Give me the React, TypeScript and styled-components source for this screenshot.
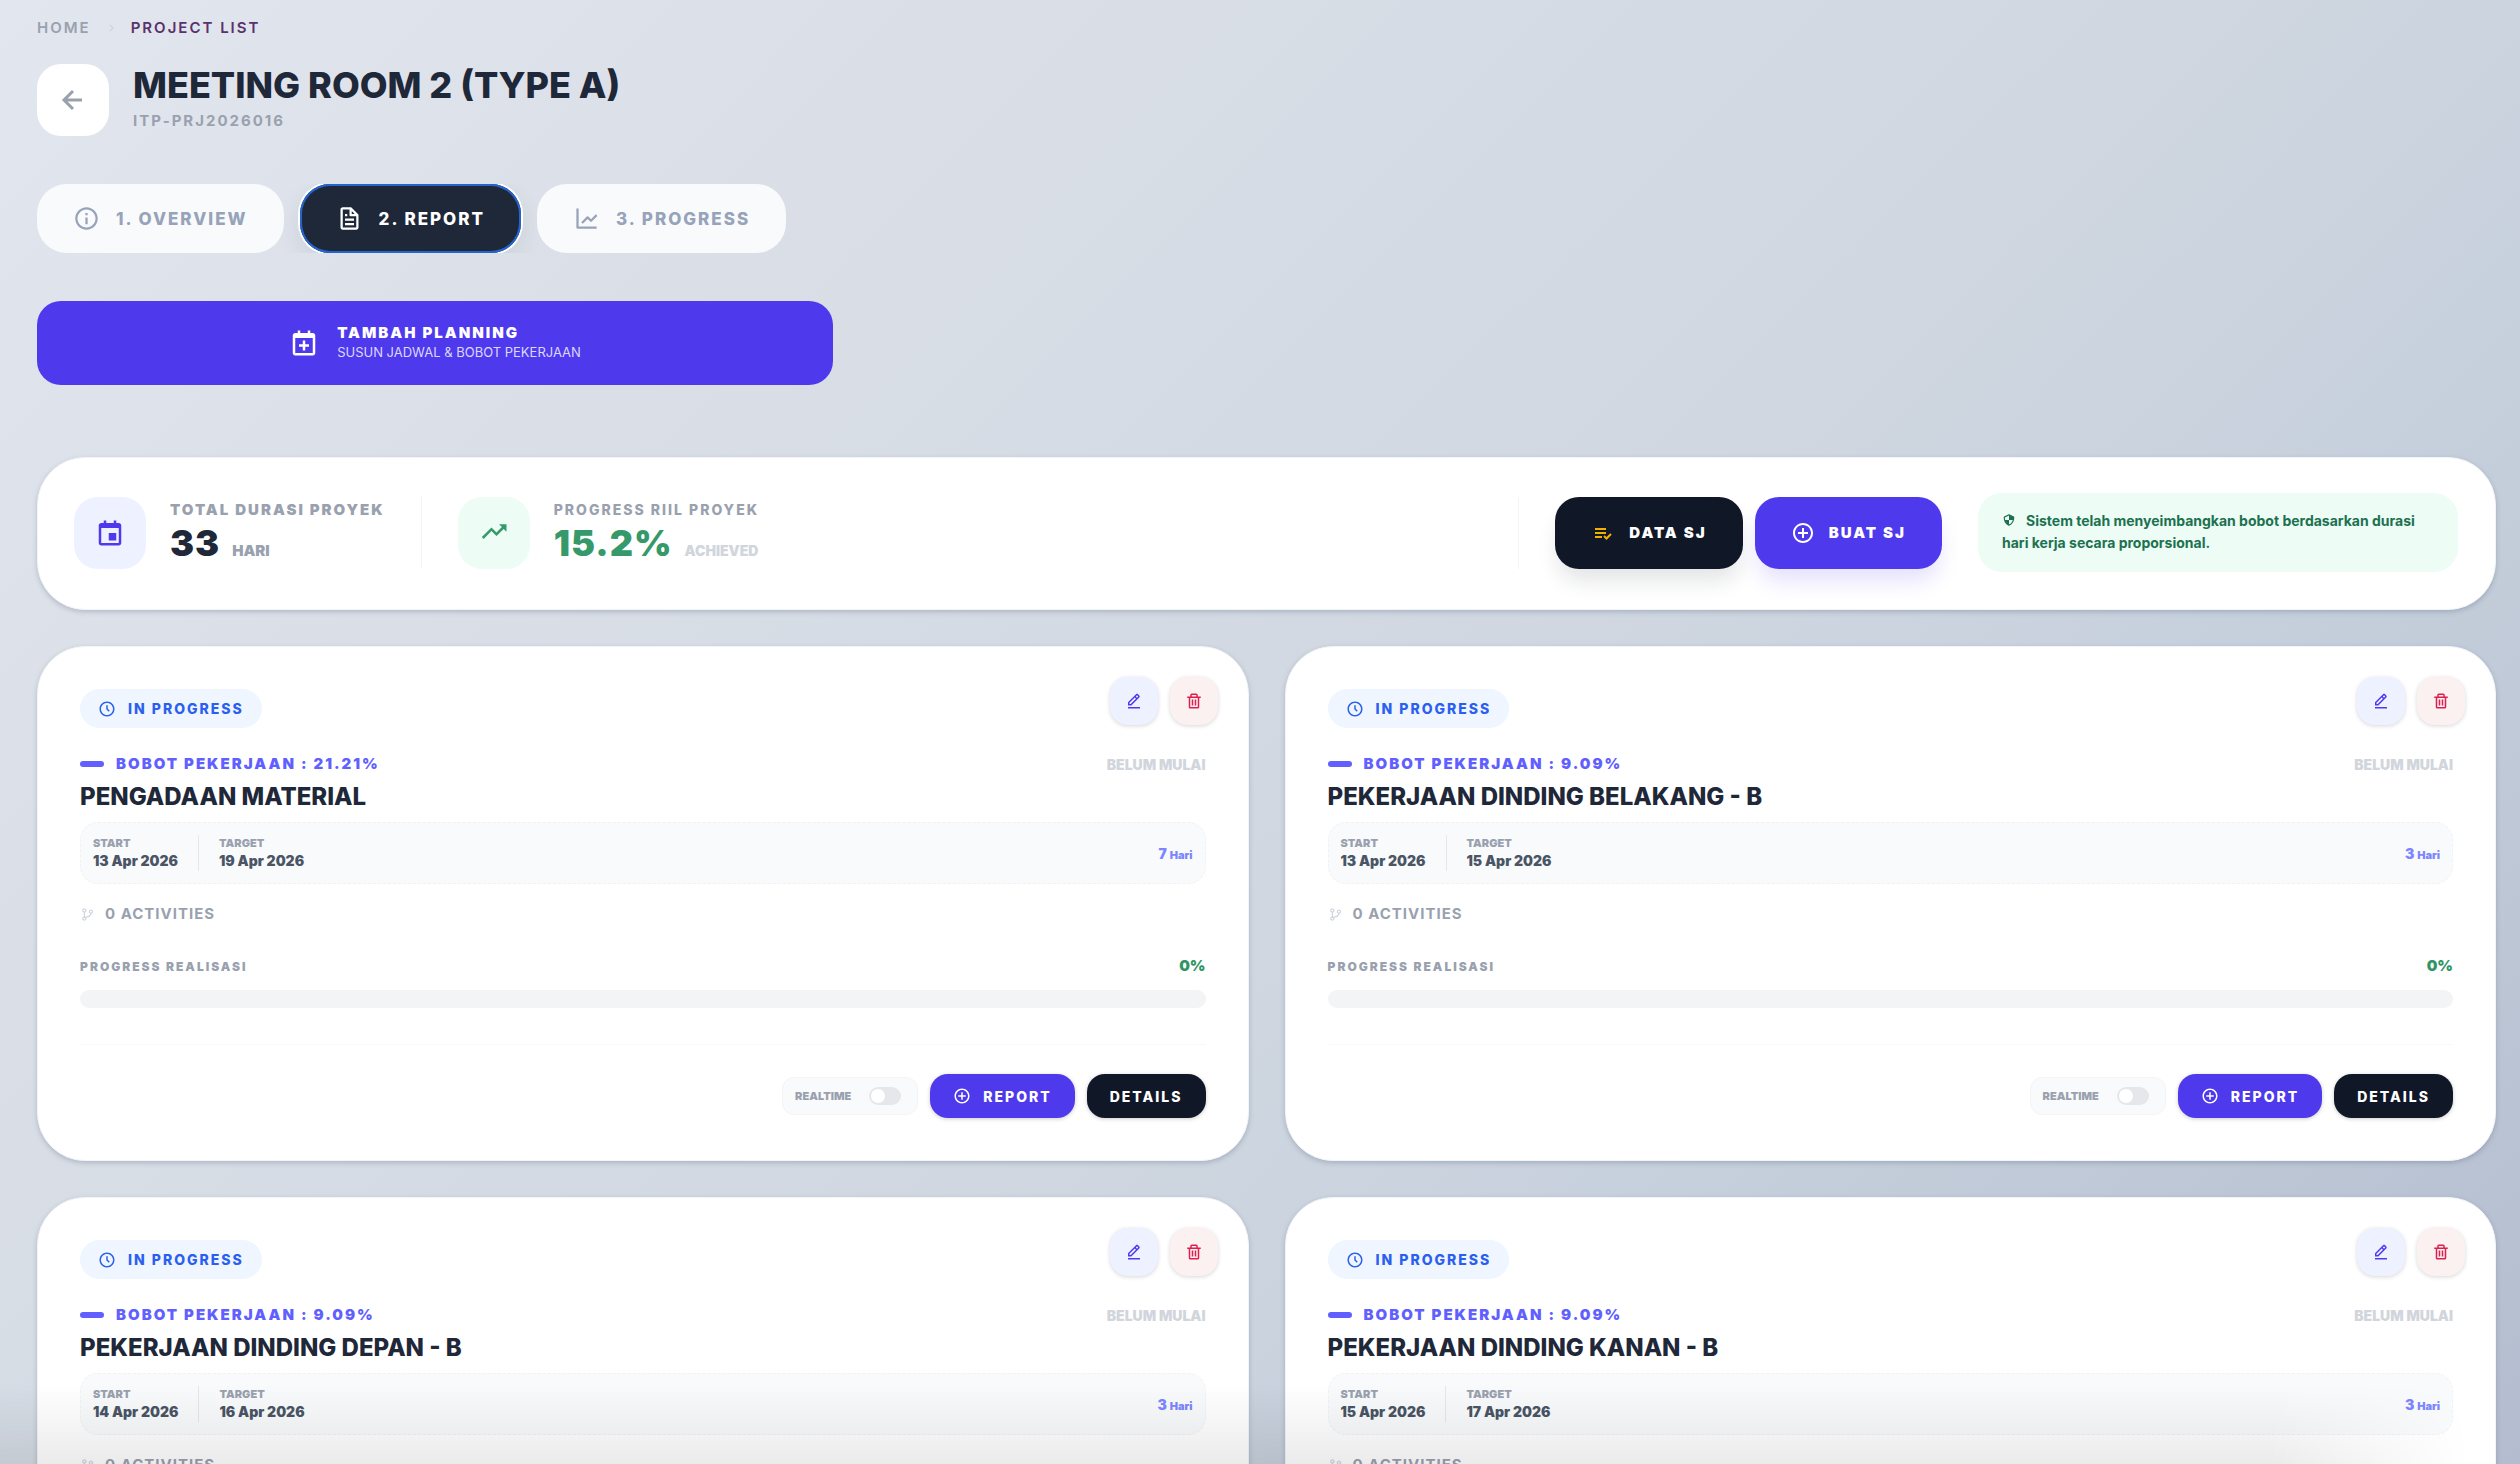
import React from "react";
import styled, { createGlobalStyle, css } from "styled-components";
import {
  BiInfoCircle, BiFile, BiLineChart, BiCalendarEvent, BiCalendarPlus, BiTrendingUp, BiPlusCircle,
  BiTimeFive, BiTrash, BiEditAlt, BiLeftArrowAlt, BiChevronRight, BiGitBranch, BiShieldQuarter,
} from "react-icons/bi";

const Global = createGlobalStyle`
  *, *::before, *::after { box-sizing: border-box; }
  body {
    margin: 0;
    font-family: Inter, "Noto Sans", sans-serif;
    color: #1f2839;
    overflow: hidden;
  }
  button { font: inherit; border: 0; cursor: pointer; margin: 0; }
  h1, h2, p { margin: 0; }
  svg { display: block; flex: none; }
`;

const Page = styled.main`
  height: 100vh;
  overflow: hidden;
  padding: 16px 24px 0 37px;
  background: linear-gradient(135deg, #e2e6ee 0%, #dadfe7 25%, #d0d7e1 55%, #c6d0dc 72%, #b4bdcf 100%);
`;

const Crumbs = styled.nav`
  display: flex;
  align-items: center;
  gap: 12px;
  line-height: 24px;
  font-size: 15px;
  font-weight: 600;
  letter-spacing: 2px;
  color: #99a1af;
`;
const Crumb = styled.a<{ $active?: boolean }>`
  text-decoration: none;
  color: ${(p) => (p.$active ? "#59316b" : "inherit")};
`;

const Header = styled.header`
  display: flex;
  align-items: center;
  gap: 24px;
  margin-top: 24px;
`;
const BackButton = styled.button`
  width: 72px;
  height: 72px;
  padding: 0;
  border-radius: 24px;
  background: #fff;
  color: #99a1af;
  display: grid;
  place-items: center;
`;
const Heading = styled.div`
  padding-bottom: 2px;
`;
const Title = styled.h1`
  font-size: 36px;
  line-height: 40px;
  font-weight: 800;
`;
const Code = styled.p`
  font-size: 15px;
  line-height: 24px;
  font-weight: 700;
  letter-spacing: 2px;
  color: #99a1af;
  margin-top: 4px;
`;

const Tabs = styled.div`
  display: flex;
  gap: 16px;
  margin-top: 48px;
  overflow: hidden;
`;
const Tab = styled.button<{ $active?: boolean }>`
  display: flex;
  align-items: center;
  gap: 16px;
  height: 69px;
  padding: 0 36px;
  border-radius: 30px;
  font-size: 17px;
  font-weight: 800;
  letter-spacing: 2px;
  background: #f9fafc;
  color: #97a3b9;
  ${(p) => p.$active && css`
    background: #1f2839;
    color: #fff;
    box-shadow: inset 0 0 0 2px #2563cf, 0 0 0 2px #fff, 0 8px 24px rgba(30, 41, 57, 0.1);
  `}
`;

const AddPlanning = styled.button`
  display: flex;
  align-items: center;
  justify-content: center;
  gap: 18px;
  width: 796px;
  height: 84px;
  margin-top: 48px;
  border-radius: 24px;
  background: #4f39ec;
  color: #fff;
  text-align: left;
`;
const AddText = styled.span`
  display: flex;
  flex-direction: column;
  padding-bottom: 3px;
`;
const AddTitle = styled.span`
  font-size: 15px;
  line-height: 20px;
  font-weight: 900;
  letter-spacing: 2px;
`;
const AddSub = styled.span`
  font-size: 13px;
  line-height: 18px;
  color: #dcd8ff;
`;

const Panel = css`
  background: #fff;
  border: 1px solid #f1f4f8;
  border-radius: 48px;
  box-shadow: 0 2px 5px rgba(60, 75, 100, 0.25);
`;

const Summary = styled.section`
  ${Panel}
  display: flex;
  align-items: center;
  height: 153px;
  margin-top: 72px;
  padding: 0 37px 2px 36px;
`;
const IconTile = styled.span<{ $bg: string; $fg: string }>`
  width: 72px;
  height: 72px;
  flex: none;
  border-radius: 24px;
  display: grid;
  place-items: center;
  background: ${(p) => p.$bg};
  color: ${(p) => p.$fg};
`;
const Stat = styled.div`
  display: flex;
  align-items: center;
  gap: 24px;
`;
const StatText = styled.div`
  padding-top: 6px;
`;
const StatLabel = styled.p<{ $small?: boolean }>`
  font-size: ${(p) => (p.$small ? 14 : 15)}px;
  line-height: 22px;
  font-weight: ${(p) => (p.$small ? 800 : 900)};
  letter-spacing: 2px;
  color: #99a1af;
`;
const StatLine = styled.p`
  display: flex;
  align-items: baseline;
  gap: 12px;
  line-height: 44px;
`;
const StatValue = styled.span<{ $color?: string }>`
  font-size: 36px;
  font-weight: 900;
  letter-spacing: 1px;
  color: ${(p) => p.$color ?? "#1f2839"};
`;
const StatUnit = styled.span<{ $faint?: boolean }>`
  font-size: ${(p) => (p.$faint ? 14 : 15)}px;
  font-weight: 900;
  color: ${(p) => (p.$faint ? "#d1d5dc" : "#99a1af")};
`;
const Divider = styled.span`
  width: 1px;
  height: 72px;
  margin: 0 36px;
  background: #f3f4f6;
`;
const Spacer = styled.span`
  flex: 1;
`;
const SummaryActions = styled.div`
  display: flex;
  gap: 12px;
`;
const BigButton = styled.button<{ $dark?: boolean }>`
  display: flex;
  align-items: center;
  gap: 14px;
  height: 72px;
  padding: 0 36px;
  border-radius: 24px;
  color: #fff;
  font-size: 15px;
  font-weight: 900;
  letter-spacing: 2px;
  background: ${(p) => (p.$dark ? "#101727" : "#4f39ec")};
  box-shadow: 0 15px 22px -4px ${(p) => (p.$dark ? "rgba(16,23,39,.12)" : "rgba(79,57,236,.16)")};
`;
const Note = styled.p`
  width: 480px;
  margin-left: 36px;
  padding: 17px 24px 18px;
  border-radius: 24px;
  background: #edfcf5;
  color: #1c7150;
  font-size: 14px;
  line-height: 22px;
  font-weight: 700;
  svg { display: inline-block; margin-right: 10px; vertical-align: -1px; }
`;

const Grid = styled.section`
  display: grid;
  grid-template-columns: 1fr 1fr;
  gap: 36px;
  margin-top: 36px;
`;
const Card = styled.article`
  ${Panel}
  padding: 30px 30px 42px 42px;
`;
const CardTop = styled.div`
  display: flex;
  justify-content: space-between;
`;
const Badge = styled.span`
  display: flex;
  align-items: center;
  gap: 12px;
  height: 39px;
  margin-top: 12px;
  padding: 0 18px;
  border-radius: 20px;
  background: #eff6ff;
  color: #2b5ff0;
  font-size: 14px;
  font-weight: 800;
  letter-spacing: 2px;
`;
const IconActions = styled.div`
  display: flex;
  gap: 12px;
`;
const IconButton = styled.button<{ $danger?: boolean }>`
  width: 48px;
  height: 48px;
  padding: 0;
  display: grid;
  place-items: center;
  border-radius: 18px;
  background: ${(p) => (p.$danger ? "#fcf1f1" : "#eef1ff")};
  color: ${(p) => (p.$danger ? "#dc1f4e" : "#4f39ec")};
  box-shadow: 0 1px 4px rgba(0, 0, 0, 0.16);
`;
const CardBody = styled.div`
  margin-right: 12px;
`;
const Row = styled.div`
  display: flex;
  align-items: center;
  justify-content: space-between;
`;
const Weight = styled.p`
  display: flex;
  align-items: center;
  gap: 12px;
  font-size: 15px;
  line-height: 24px;
  font-weight: 900;
  letter-spacing: 2px;
  color: #615fff;
  &::before {
    content: "";
    width: 24px;
    height: 6px;
    border-radius: 3px;
    background: #615fff;
  }
`;
const WeightRow = styled(Row)`
  margin-top: 24px;
`;
const Status = styled.span`
  font-size: 14px;
  font-weight: 900;
  color: #d1d5dc;
`;
const CardTitle = styled.h2`
  font-size: 24px;
  line-height: 30px;
  font-weight: 800;
  margin-top: 6px;
`;
const Dates = styled.div`
  display: flex;
  align-items: center;
  height: 62px;
  margin-top: 10px;
  padding: 0 12px;
  border: 1px dashed #f0f2f5;
  border-radius: 18px;
  background: #f9fafc;
`;
const DateCell = styled.div`
  & + & {
    margin-left: 20px;
    padding-left: 20px;
    border-left: 1px solid #e5e7eb;
  }
`;
const DateLabel = styled.p`
  font-size: 11px;
  line-height: 16px;
  font-weight: 900;
  color: #99a1af;
`;
const DateValue = styled.p`
  font-size: 14px;
  line-height: 20px;
  font-weight: 900;
  color: #4a5565;
`;
const Days = styled.span`
  margin-left: auto;
  font-size: 14px;
  font-weight: 900;
  color: #7c86ff;
  small { font-size: 11px; }
`;
const Activities = styled.p`
  display: flex;
  align-items: center;
  gap: 10px;
  margin-top: 18px;
  font-size: 15px;
  line-height: 24px;
  font-weight: 700;
  letter-spacing: 1px;
  color: #99a1af;
  svg { color: #d1d5dc; }
`;
const ProgressRow = styled(Row)`
  margin-top: 28px;
`;
const ProgressLabel = styled.span`
  font-size: 12px;
  font-weight: 900;
  letter-spacing: 2px;
  color: #99a1af;
`;
const ProgressValue = styled.span`
  font-size: 15px;
  line-height: 24px;
  font-weight: 900;
  color: #2f9565;
`;
const Track = styled.div`
  height: 18px;
  margin-top: 12px;
  border-radius: 9px;
  background: #f3f4f6;
`;
const Footer = styled.footer`
  display: flex;
  align-items: center;
  justify-content: flex-end;
  gap: 12px;
  margin-top: 36px;
  padding-top: 29px;
  border-top: 1px solid #f7f8fa;
`;
const Realtime = styled.label`
  display: flex;
  align-items: center;
  gap: 18px;
  height: 38px;
  padding: 0 16px 0 12px;
  border: 1px solid #f3f4f6;
  border-radius: 12px;
  background: #f9fafc;
  color: #99a1af;
  font-size: 11px;
  font-weight: 900;
`;
const Switch = styled.input`
  appearance: none;
  width: 32px;
  height: 18px;
  margin: 0;
  border-radius: 9px;
  background: #e5e7eb;
  display: flex;
  align-items: center;
  padding-left: 2px;
  &::before {
    content: "";
    width: 14px;
    height: 14px;
    border-radius: 50%;
    background: #fff;
  }
`;
const SmallButton = styled.button<{ $dark?: boolean }>`
  display: flex;
  align-items: center;
  gap: 12px;
  height: 44px;
  padding: 0 23px;
  border-radius: 18px;
  background: ${(p) => (p.$dark ? "#101727" : "#4f39ec")};
  color: #fff;
  font-size: 14px;
  font-weight: 800;
  letter-spacing: 2px;
  box-shadow: 0 1px 4px rgba(0, 0, 0, 0.2);
`;
const BottomShade = styled.div`
  position: fixed;
  left: 0;
  right: 0;
  bottom: 0;
  height: 80px;
  pointer-events: none;
  background: linear-gradient(to bottom, rgba(0, 0, 0, 0), rgba(0, 0, 0, 0.08));
  mask-image: linear-gradient(to right, #000 90%, transparent 98%);
`;

type Job = { name: string; weight: string; start: string; target: string; days: number };
const jobs: Job[] = [
  { name: "PENGADAAN MATERIAL", weight: "21.21%", start: "13 Apr 2026", target: "19 Apr 2026", days: 7 },
  { name: "PEKERJAAN DINDING BELAKANG - B", weight: "9.09%", start: "13 Apr 2026", target: "15 Apr 2026", days: 3 },
  { name: "PEKERJAAN DINDING DEPAN - B", weight: "9.09%", start: "14 Apr 2026", target: "16 Apr 2026", days: 3 },
  { name: "PEKERJAAN DINDING KANAN - B", weight: "9.09%", start: "15 Apr 2026", target: "17 Apr 2026", days: 3 },
];

const ListCheckIcon = () => (
  <svg width="24" height="24" viewBox="0 0 24 24" fill="#f0b100">
    <path d="M4 7h11v2H4zm0 4h11v2H4zm0 4h7v2H4zm15.300-2.700-3.800 3.800-1.800-1.800-1.400 1.400 3.200 3.200 5.200-5.200z" />
  </svg>
);

function JobCard({ job }: { job: Job }) {
  return (
    <Card>
      <CardTop>
        <Badge><BiTimeFive size={18} />IN PROGRESS</Badge>
        <IconActions>
          <IconButton aria-label="Edit"><BiEditAlt size={18} /></IconButton>
          <IconButton $danger aria-label="Delete"><BiTrash size={18} /></IconButton>
        </IconActions>
      </CardTop>
      <CardBody>
        <WeightRow><Weight>BOBOT PEKERJAAN : {job.weight}</Weight><Status>BELUM MULAI</Status></WeightRow>
        <CardTitle>{job.name}</CardTitle>
        <Dates>
          <DateCell><DateLabel>START</DateLabel><DateValue>{job.start}</DateValue></DateCell>
          <DateCell><DateLabel>TARGET</DateLabel><DateValue>{job.target}</DateValue></DateCell>
          <Days>{job.days} <small>Hari</small></Days>
        </Dates>
        <Activities><BiGitBranch size={15} />0 ACTIVITIES</Activities>
        <ProgressRow><ProgressLabel>PROGRESS REALISASI</ProgressLabel><ProgressValue>0%</ProgressValue></ProgressRow>
        <Track />
        <Footer>
          <Realtime>REALTIME<Switch type="checkbox" /></Realtime>
          <SmallButton><BiPlusCircle size={18} />REPORT</SmallButton>
          <SmallButton $dark>DETAILS</SmallButton>
        </Footer>
      </CardBody>
    </Card>
  );
}

export default function App() {
  return (
    <Page>
      <Global />
      <Crumbs aria-label="Breadcrumb">
        <Crumb href="#home">HOME</Crumb>
        <BiChevronRight size={16} color="#d1d5dc" />
        <Crumb href="#projects" $active>PROJECT LIST</Crumb>
      </Crumbs>
      <Header>
        <BackButton aria-label="Back"><BiLeftArrowAlt size={36} /></BackButton>
        <Heading>
          <Title>MEETING ROOM 2 (TYPE A)</Title>
          <Code>ITP-PRJ2026016</Code>
        </Heading>
      </Header>
      <Tabs>
        <Tab><BiInfoCircle size={27} />1. OVERVIEW</Tab>
        <Tab $active><BiFile size={27} />2. REPORT</Tab>
        <Tab><BiLineChart size={27} />3. PROGRESS</Tab>
      </Tabs>
      <AddPlanning>
        <BiCalendarPlus size={30} />
        <AddText>
          <AddTitle>TAMBAH PLANNING</AddTitle>
          <AddSub>SUSUN JADWAL &amp; BOBOT PEKERJAAN</AddSub>
        </AddText>
      </AddPlanning>
      <Summary>
        <Stat>
          <IconTile $bg="#eef1ff" $fg="#4f39ec"><BiCalendarEvent size={30} /></IconTile>
          <StatText>
            <StatLabel>TOTAL DURASI PROYEK</StatLabel>
            <StatLine><StatValue>33</StatValue><StatUnit>HARI</StatUnit></StatLine>
          </StatText>
        </Stat>
        <Divider />
        <Stat>
          <IconTile $bg="#edfcf5" $fg="#35996a"><BiTrendingUp size={30} /></IconTile>
          <StatText>
            <StatLabel $small>PROGRESS RIIL PROYEK</StatLabel>
            <StatLine><StatValue $color="#35996a">15.2%</StatValue><StatUnit $faint>ACHIEVED</StatUnit></StatLine>
          </StatText>
        </Stat>
        <Spacer />
        <Divider />
        <SummaryActions>
          <BigButton $dark><ListCheckIcon />DATA SJ</BigButton>
          <BigButton><BiPlusCircle size={24} />BUAT SJ</BigButton>
        </SummaryActions>
        <Note><BiShieldQuarter size={14} />Sistem telah menyeimbangkan bobot berdasarkan durasi hari kerja secara proporsional.</Note>
      </Summary>
      <Grid>{jobs.map((j) => <JobCard key={j.name} job={j} />)}</Grid>
      <BottomShade />
    </Page>
  );
}
